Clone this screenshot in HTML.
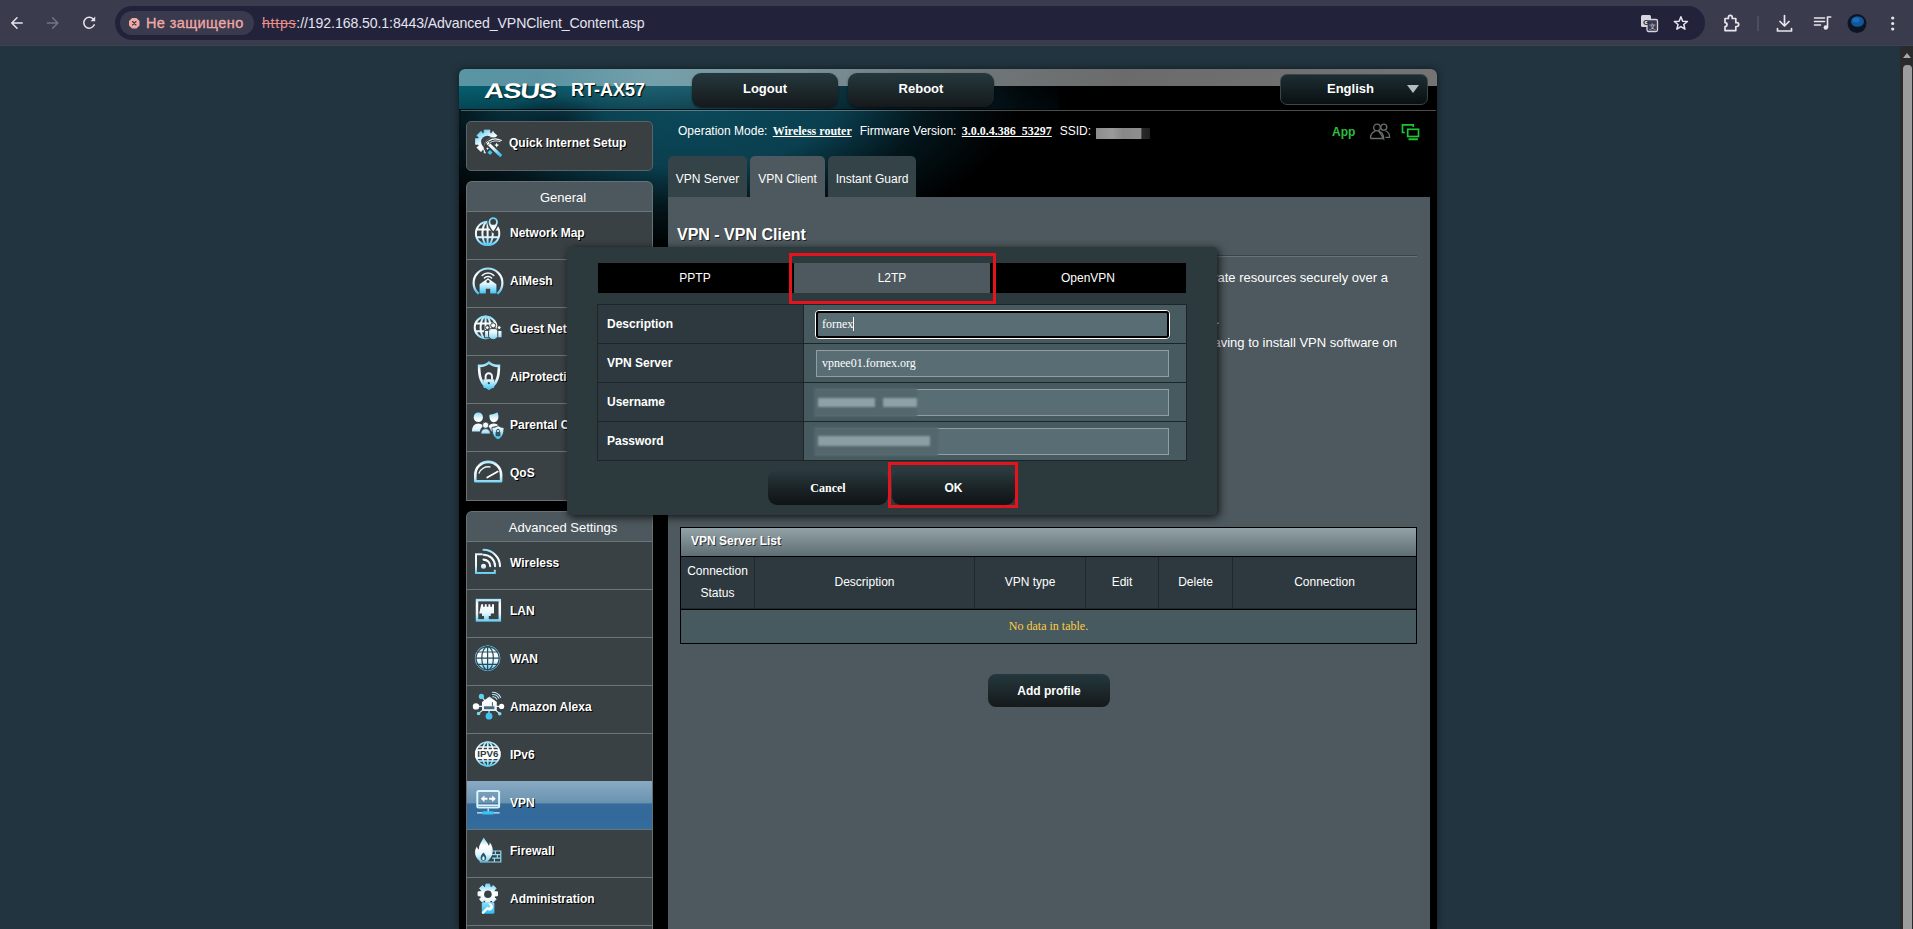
<!DOCTYPE html>
<html lang="en">
<head>
<meta charset="utf-8">
<title>ASUS Wireless Router RT-AX57 - VPN Client</title>
<style>
html,body{margin:0;padding:0;}
body{width:1913px;height:929px;overflow:hidden;position:relative;background:#21343f;font-family:"Liberation Sans",Arial,sans-serif;font-size:12px;color:#fff;}
.abs{position:absolute;}
/* ---------- browser chrome ---------- */
#chrome{left:0;top:0;width:1913px;height:46px;background:#3b3b4e;}
#chrome .strip{left:0;top:45px;width:1913px;height:1px;background:#3a4450;}
#urlbar{left:115px;top:6px;width:1590px;height:34px;border-radius:17px;background:#22223a;}
#chip{left:5px;top:5px;width:134px;height:24px;border-radius:12px;background:#3a3a4f;}
#chip span{left:26px;top:4px;font-size:14.5px;color:#f2a9a4;white-space:nowrap;letter-spacing:0.4px;-webkit-text-stroke:.3px #f2a9a4;}
#url{left:147px;top:9px;font-size:14.1px;letter-spacing:-.085px;color:#e4e4ee;white-space:nowrap;}
#url s{color:#e98f8a;letter-spacing:.75px;}
/* ---------- scrollbar ---------- */
#sb{left:1900px;top:46px;width:13px;height:883px;background:#2a2a2c;}
#sb .thumb{left:3px;top:19px;width:9px;height:880px;border-radius:4px;background:#9c9c9c;}
/* ---------- router ---------- */
#wrap{left:459px;top:69px;width:978px;height:860px;background:#000;border-radius:6px 6px 0 0;overflow:hidden;box-shadow:0 0 7px rgba(0,0,0,.5);}
.hbtn{height:34px;border-radius:9px;background:linear-gradient(#25383d,#15191b);font-weight:bold;font-size:13px;text-align:center;line-height:32px;box-shadow:0 1px 2px rgba(0,0,0,.6);}
.side{left:7px;width:187px;background:#3a4042;overflow:hidden;}
.side:after{content:"";position:absolute;left:0;top:0;right:0;bottom:0;border:1px solid #687174;border-radius:6px 6px 0 0;}
.mi{left:0;width:187px;height:47px;border-top:1px solid #6b7578;background:#3a4144;}
.mi span{left:44px;top:14px;font-weight:bold;font-size:12px;text-shadow:1px 1px 0 #000;white-space:nowrap;}
.mi svg.ic{position:absolute;left:0;top:-1px;}
.tab{top:87px;height:41px;border-radius:5px 5px 0 0;background:#344347;font-size:12px;text-align:center;line-height:46px;color:#fff;}
#content{left:209px;top:128px;width:762px;height:740px;background:#4d595e;}
.th{top:29px;height:51px;background:#2d393e;text-align:center;line-height:50px;font-size:12px;}
.dt{top:16px;height:30px;line-height:30px;text-align:center;font-size:12px;}
.dth{left:1px;width:205px;height:38px;background:#2d393e;font-weight:bold;font-size:12px;line-height:38px;text-indent:9px;}
.dtd{left:207px;width:382px;height:38px;background:#475a5f;}
.inp{left:12px;top:6px;width:351px;height:25px;border:1px solid #929ea1;background:#596e74;font-family:"Liberation Serif",serif;font-size:12px;color:#fff;}
.dbtn{top:223px;width:122px;height:35px;border-radius:9px;background:linear-gradient(#2a3a3e,#1a2225 55%,#0f1315);font-weight:bold;font-size:12px;text-align:center;line-height:37px;}
.lk{font-family:"Liberation Serif",serif;font-weight:bold;text-decoration:underline;}
th,td{padding:0;}
</style>
</head>
<body>
<svg width="0" height="0" style="position:absolute"><defs>
<linearGradient id="ig" gradientUnits="userSpaceOnUse" x1="0" y1="6" x2="0" y2="36"><stop offset="0" stop-color="#62d0f4"/><stop offset=".32" stop-color="#ffffff"/><stop offset=".62" stop-color="#e4f6fd"/><stop offset="1" stop-color="#25bbef"/></linearGradient>
<linearGradient id="ig2" gradientUnits="userSpaceOnUse" x1="0" y1="23" x2="0" y2="36"><stop offset="0" stop-color="#9fe2f8"/><stop offset="1" stop-color="#25bbef"/></linearGradient>
<linearGradient id="igq" gradientUnits="userSpaceOnUse" x1="4" y1="0" x2="22" y2="28"><stop offset="0" stop-color="#4ecbf3"/><stop offset=".45" stop-color="#ffffff"/><stop offset=".7" stop-color="#eaf8fe"/><stop offset="1" stop-color="#35c0ef"/></linearGradient>
</defs></svg>
<!-- browser toolbar -->
<div id="chrome" class="abs">
  <div class="strip abs"></div>
  <div id="urlbar" class="abs">
    <div id="chip" class="abs"><span class="abs">Не защищено</span></div>
    <svg class="abs" style="left:12.500px;top:11px;" width="12.500" height="12.500" viewBox="0 0 16 16"><path d="M5.200 1.300h5.600l3.900 3.900v5.600l-3.900 3.900h-5.600l-3.900-3.900v-5.600z" fill="#f2a9a4"/><path d="M5.800 5.800l4.400 4.400M10.200 5.800l-4.400 4.400" stroke="#3a3a4f" stroke-width="1.500" stroke-linecap="round"/></svg>
    <div id="url" class="abs"><s>https</s>://192.168.50.1:8443/Advanced_VPNClient_Content.asp</div>
  </div>
  <svg class="abs" style="left:0;top:0;" width="115" height="46" viewBox="0 0 115 46"><g fill="none" stroke-width="1.500" stroke-linecap="round" stroke-linejoin="round"><path d="M22.200 23h-10M17 17.800l-5.200 5.200 5.200 5.200" stroke="#e6e6ee"/><path d="M47.400 23h10M52.600 17.800l5.200 5.200-5.200 5.200" stroke="#74748a"/><path d="M93.600 19.600a5.400 5.400 0 1 0 .6 5.200" stroke="#e6e6ee"/></g><path d="M95.200 16.600v4.700h-4.700z" fill="#e6e6ee"/></svg>
  <svg class="abs" style="left:1630px;top:6px;" width="283" height="34" viewBox="0 0 283 34">
    <g fill="none" stroke="#e6e6ee" stroke-width="1.700" stroke-linejoin="round" stroke-linecap="round">
      <path d="M50.90 10.70L52.66 15.17L57.46 15.47L53.75 18.53L54.96 23.18L50.90 20.60L46.84 23.18L48.05 18.53L44.34 15.47L49.14 15.17z" stroke-width="1.500"/>
      <path d="M95 12.500h3.400v-1.200a1.900 1.900 0 0 1 3.800 0v1.200h3.600v4.200h1a1.900 1.900 0 0 1 0 3.800h-1v4.100h-10.800v-4a2 2 0 0 0 0-4z"/>
      <path d="M154.500 9.500v10M150 15.500l4.500 4.500 4.500-4.500M147.500 22.500v2.500h14v-2.500"/>
      <path d="M184.500 12h10M184.500 15.500h10M184.500 19h6" stroke-width="1.600"/><path d="M197.500 21.500v-10.500h3.200" stroke-width="1.600"/>
    </g>
    <circle cx="195.800" cy="21.500" r="2.200" fill="#e6e6ee"/>
    <path d="M128 10v15" stroke="#5a5a6e" stroke-width="1.300"/>
    <g fill="#e6e6ee"><circle cx="262.700" cy="12" r="1.600"/><circle cx="262.700" cy="17.500" r="1.600"/><circle cx="262.700" cy="23" r="1.600"/></g>
    <circle cx="227" cy="17.500" r="9.500" fill="#0c1524"/><ellipse cx="227.500" cy="15.500" rx="6.500" ry="5.300" fill="#12579a"/><ellipse cx="226" cy="14" rx="3.500" ry="2.500" fill="#1c6db8"/>
    <g><rect x="11" y="9" width="10" height="12" rx="1.500" fill="#d6d6e0"/><rect x="17" y="13.500" width="10.500" height="12" rx="1.500" fill="#3b3b4e" stroke="#d6d6e0" stroke-width="1.300"/><text x="16" y="18.500" text-anchor="middle" font-family="Liberation Sans,Arial,sans-serif" font-weight="bold" font-size="8" fill="#2b2b3c">G</text><text x="22.300" y="23.400" text-anchor="middle" font-family="Liberation Sans,Arial,sans-serif" font-size="7" fill="#d6d6e0">文</text></g>
  </svg>
</div>
<div id="sb" class="abs"><i class="abs" style="left:2.500px;top:6.500px;width:0;height:0;border-left:4.500px solid transparent;border-right:4.500px solid transparent;border-bottom:5px solid #a8a8a8;"></i><div class="thumb abs"></div></div>

<!-- router page -->
<div id="wrap" class="abs">
  <div class="abs" style="left:0;top:0;width:979px;height:240px;background:radial-gradient(ellipse 330px 150px at 230px 30px,#0b4a5b 0%,#0a3f4f 45%,rgba(6,36,46,.6) 72%,rgba(0,0,0,0) 100%);"></div>
  <div class="abs" style="left:0;top:17px;width:600px;height:24px;background:linear-gradient(90deg,#05606f 0,#0a586a 14%,#1b6273 30%,#1b5c6c 42%,#124453 55%,#06232b 72%,rgba(0,0,0,0) 100%);"></div>
  <div class="abs" style="left:0;top:17px;width:600px;height:24px;background:linear-gradient(rgba(0,0,0,0),rgba(0,20,30,.35));"></div>
  <div class="abs" style="left:40px;top:26px;width:110px;height:60px;background:radial-gradient(ellipse 50% 50% at 50% 50%,rgba(0,8,12,.6),rgba(0,0,0,0));"></div>
  <div id="hdr" class="abs" style="left:0;top:0;width:979px;height:17px;background:linear-gradient(90deg,#5995a3 0,#5a92a1 8%,#74a0ab 20%,#7a939a 34%,#70787b 50%,#6b6b6b 68%,#747474 100%);"></div>
  <div class="abs" style="left:0;top:40px;width:979px;height:1px;background:rgba(0,0,0,.75);"></div>
  <div class="abs" style="left:2px;top:41px;width:975px;height:1px;background:rgba(255,255,255,.3);"></div>
  <div class="abs" id="logo" style="left:27px;top:10px;font-size:21px;line-height:24px;font-weight:bold;letter-spacing:-1px;transform-origin:0 0;transform:scaleX(1.31) skewX(-5deg);text-shadow:1px 1px 1px rgba(0,0,0,.6);">ASUS</div>
  <div class="abs" style="left:112px;top:11px;font-size:18px;font-weight:bold;text-shadow:1px 1px 1px #000;">RT-AX57</div>
  <div class="hbtn abs" style="left:233px;top:4px;width:146px;">Logout</div>
  <div class="hbtn abs" style="left:389px;top:4px;width:146px;">Reboot</div>
  <div class="abs" id="lang" style="left:821px;top:5px;width:146px;height:29px;border:1px solid #37474d;border-radius:7px;background:linear-gradient(#1d2e33,#0a0f11);font-weight:bold;font-size:13px;line-height:27px;"><span class="abs" style="left:46px;top:0;">English</span><i class="abs" style="left:126px;top:10px;width:0;height:0;border-left:6px solid transparent;border-right:6px solid transparent;border-top:8px solid #b4bcc0;"></i></div>

  <!-- sidebar -->
  <div class="abs" id="qis" style="left:7px;top:52px;width:185px;height:48px;border:1px solid #596368;border-radius:5px;background:#3a4042;">
    <svg class="abs" style="left:8px;top:7px;" width="30" height="30" viewBox="0 0 30 30"><defs><clipPath id="qc"><path d="M0 0h19v3.500l5.500 4.500-9.500 .5-5 4.500-1.500 6 2.500 5.500-2.500 5.500h-8.500z"/></clipPath></defs>
<g clip-path="url(#qc)"><path d="M9.38 3.99 L9.18 1.15 L14.82 1.15 L14.62 3.99 L16.16 4.63 L18.03 2.48 L22.02 6.47 L19.87 8.34 L20.51 9.88 L23.35 9.68 L23.35 15.32 L20.51 15.12 L19.87 16.66 L22.02 18.53 L18.03 22.52 L16.16 20.37 L14.62 21.01 L14.82 23.85 L9.18 23.85 L9.38 21.01 L7.84 20.37 L5.97 22.52 L1.98 18.53 L4.13 16.66 L3.49 15.12 L0.65 15.32 L0.65 9.68 L3.49 9.88 L4.13 8.34 L1.98 6.47 L5.97 2.48 L7.84 4.63Z" fill="url(#igq)" stroke="url(#igq)" stroke-width="1" stroke-linejoin="round"/><circle cx="12.300" cy="13" r="6.200" fill="#3a4144"/></g>
<path d="M12 13.400l14.300 13.800" stroke="#3a4144" stroke-width="4.800"/><path d="M11.600 13l14.600 14.200" stroke="url(#igq)" stroke-width="3.100"/><path d="M13.300 12.600l-2.200 2.400M15 14.200l-2.200 2.400" stroke="#3a4144" stroke-width=".7"/>
<g fill="none" stroke="#e8f7fd" stroke-linecap="round"><path d="M13.800 12c3.600-2.600 7.600-3 12.600-.6" stroke-width="1.100"/><path d="M15.400 13.400c3.200-1.800 6.400-1.900 9.600-.8" stroke-width=".9"/></g>
<path d="M21.700 13.800l.9 1.600 1.700.7-1.700.7-.9 1.600-.9-1.600-1.700-.7 1.700-.7z" fill="#fff"/><path d="M12.500 18.200l.6 1 1 .4-1 .4-.6 1-.6-1-1-.4 1-.4z" fill="#fff"/><path d="M15 21l2.500 2.500-2.500 2.500-2.500-2.500z" fill="#3ec5f1"/></svg><span class="abs" style="left:42px;top:14px;font-weight:bold;font-size:12px;text-shadow:1px 1px 0 #000;white-space:nowrap;">Quick Internet Setup</span>
  </div>
  <div class="abs side" id="gen" style="top:112px;height:320px;border-radius:6px 6px 0 0;background:#4c585d;">
    <div class="abs" style="left:0;top:9px;width:194px;text-align:center;font-size:13px;">General</div>
    <div class="mi abs" style="top:30px;"><svg class="ic" width="50" height="48" viewBox="0 0 50 48"><g transform="translate(0,1)"><g fill="none" stroke="url(#ig)" stroke-width="2"><circle cx="21.6" cy="21.4" r="11.7"/><ellipse cx="21.6" cy="21.4" rx="5.2" ry="11.7"/><path d="M10.5 17.6h22.2M10.5 25.2h22.2M21.6 9.7v23.4"/></g>
<path d="M27.2 4.6a5.3 5.3 0 0 1 5.3 5.3c0 3.6-5.3 10.6-5.3 10.6s-5.3-7-5.3-10.6a5.3 5.3 0 0 1 5.3-5.3z" fill="url(#ig)" stroke="#3a4042" stroke-width="1.3"/><circle cx="27.2" cy="9.9" r="2.9" fill="#3a4042"/></g></svg><span class="abs">Network Map</span></div>
    <div class="mi abs" style="top:78px;"><svg class="ic" width="50" height="48" viewBox="0 0 50 48"><path d="M12.600 34.800A14.400 14.400 0 1 1 31.400 34.800" fill="none" stroke="url(#ig)" stroke-width="2.2"/>
<path d="M13.6 25.2l8.4-6 8.4 6v9.4h-6.2v-4.8h-4.4v4.8h-6.2z" fill="url(#ig)"/>
<path d="M16.2 16.4a8 8 0 0 1 11.6 0M18.4 19a5 5 0 0 1 7.2 0" fill="none" stroke="url(#ig)" stroke-width="1.5" stroke-linecap="round"/><circle cx="22" cy="22.4" r="1.5" fill="#3a4042"/></svg><span class="abs">AiMesh</span></div>
    <div class="mi abs" style="top:126px;"><svg class="ic" width="50" height="48" viewBox="0 0 50 48"><g transform="translate(0,1)"><g fill="none" stroke="url(#ig)" stroke-width="2"><circle cx="19.6" cy="19.4" r="10.9"/><ellipse cx="19.6" cy="19.4" rx="5" ry="10.9"/><path d="M9 15.6h21M9 23.2h21M19.6 8.5v21.8"/></g>
<g fill="url(#ig)" stroke="#3a4042" stroke-width="1"><circle cx="21.3" cy="19.6" r="1.9"/><path d="M18.6 22.4h5.2v7.4h-5.2z"/><circle cx="33.2" cy="19.6" r="1.9"/><path d="M30.8 22.4h5.2v7.4h-5.2z"/><circle cx="27.2" cy="17.4" r="2.5"/><path d="M22.6 23.2q0-2.6 2.6-2.6h4q2.6 0 2.6 2.6v5.600q-2 3-4.600 3t-4.600-3z"/></g></g></svg><span class="abs">Guest Network</span></div>
    <div class="mi abs" style="top:174px;"><svg class="ic" width="50" height="48" viewBox="0 0 50 48"><path d="M23 7.600c2.600 2.400 6 3.300 9.900 3.300 0 9-1 17.600-9.900 22.800-8.900-5.200-9.900-13.800-9.900-22.800 3.900 0 7.300-.9 9.900-3.300z" fill="none" stroke="url(#ig)" stroke-width="2.600"/>
<rect x="17.400" y="24.300" width="10.800" height="8.800" rx="1" fill="url(#ig)"/><path d="M19.600 24.300v-2.900a3.200 3.200 0 0 1 6.400 0v2.900" fill="none" stroke="url(#ig)" stroke-width="1.900"/><circle cx="22.800" cy="28.200" r="1.100" fill="#3a4042"/></svg><span class="abs">AiProtection</span></div>
    <div class="mi abs" style="top:222px;"><svg class="ic" width="50" height="48" viewBox="0 0 50 48"><g transform="translate(0,1)"><g fill="url(#ig)"><path d="M12.300 8.400c2.700 0 4.600 2 4.600 4.800s-1.900 4.800-4.600 4.800-4.600-2-4.600-4.800 1.900-4.800 4.600-4.800z"/><path d="M6 27.400c0-5 2.600-7.800 6.300-7.800 2.300 0 4 .9 5 2.600-2 1.100-3.100 3-3.300 5.200z"/>
<path d="M23.400 10.800c2.300-.2 5.800-1 8-2.600.9 1.600 1 3.200 1 4.800 0 2.800-1.900 5.200-4.600 5.200s-4.600-2.400-4.400-7.400z"/><path d="M22.400 22.400c1.200-1.800 3-2.800 5.400-2.800 2 0 3.600.7 4.700 2l-5.800 1.400-.5 4.200h-1.200c-.3-2-1.200-3.700-2.600-4.800z"/>
<circle cx="19.600" cy="21.200" r="3.100" stroke="#3a4042" stroke-width=".8"/><path d="M14.800 30c0-3.400 2-5.200 4.800-5.200s4.800 1.800 4.800 5.200z" stroke="#3a4042" stroke-width=".8"/>
<path d="M32 21.600c1.600 1.300 3.600 1.900 6 1.900 0 5.600-1 9.600-6 12.400-5-2.800-6-6.800-6-12.400 2.400 0 4.400-.6 6-1.900z" stroke="#3a4042" stroke-width=".9"/></g>
<rect x="29.600" y="28" width="4.800" height="4.200" rx=".6" fill="#33545f"/><path d="M30.600 28v-1.300a1.400 1.400 0 0 1 2.800 0v1.300" fill="none" stroke="#33545f" stroke-width="1"/></g></svg><span class="abs">Parental Controls</span></div>
    <div class="mi abs" style="top:270px;height:48px;"><svg class="ic" width="50" height="48" viewBox="0 0 50 48"><path d="M9.300 30.200v-6.400a12.900 12.900 0 0 1 25.800 0v6.400z" fill="none" stroke="url(#ig)" stroke-width="2.600" stroke-linejoin="round"/>
<path d="M12.800 22.600a9.800 9.800 0 0 1 11.600-6.600" fill="none" stroke="#dff4fc" stroke-width="1.400"/><path d="M21.200 26.600l10.600-6" stroke="#fff" stroke-width="1.700" stroke-linecap="round"/></svg><span class="abs">QoS</span></div>
  </div>
  <div class="abs side" id="adv" style="top:442px;height:420px;border-radius:6px 6px 0 0;background:#4c585d;">
    <div class="abs" style="left:0;top:9px;width:194px;text-align:center;font-size:13px;">Advanced Settings</div>
    <div class="mi abs" style="top:30px;"><svg class="ic" width="50" height="48" viewBox="0 0 50 48"><path d="M16.600 13.300h-6.600v18.800h18.800v-3.400" fill="none" stroke="url(#ig)" stroke-width="2"/><circle cx="17.500" cy="25.300" r="2.500" fill="url(#ig)"/>
<g fill="none" stroke="url(#ig)" stroke-width="2.100" stroke-linecap="round"><path d="M17.500 18.600a6.700 6.700 0 0 1 6.700 6.700"/><path d="M17.500 13.700a11.600 11.600 0 0 1 11.600 11.600"/><path d="M17.500 8.800a16.500 16.500 0 0 1 16.500 16.500"/></g></svg><span class="abs">Wireless</span></div>
    <div class="mi abs" style="top:78px;"><svg class="ic" width="50" height="48" viewBox="0 0 50 48"><rect x="11" y="11.100" width="22.800" height="20.300" fill="none" stroke="url(#ig)" stroke-width="2.500"/>
<path d="M15.200 15.200h1.900v2.600h1.700v-2.600h1.900v2.600h1.700v-2.600h1.900v2.600h1.700v-2.600h2v9.200h-3.200v2.600h-2v4h-4.800v-4h-2v-2.600h-2.800z" fill="url(#ig)"/></svg><span class="abs">LAN</span></div>
    <div class="mi abs" style="top:126px;"><svg class="ic" width="50" height="48" viewBox="0 0 50 48"><circle cx="21.600" cy="21.200" r="12.400" fill="url(#ig)" stroke="#5ac8ee" stroke-width=".8"/><g fill="none" stroke="#2c4a56" stroke-width="1.200"><ellipse cx="21.600" cy="21.200" rx="5.800" ry="11.600"/><path d="M21.600 9.400v23.600M9.600 21.200h24M11.400 15h20.400M11.400 27.400h20.400"/><circle cx="21.600" cy="21.200" r="11.500"/></g></svg><span class="abs">WAN</span></div>
    <div class="mi abs" style="top:174px;"><svg class="ic" width="50" height="48" viewBox="0 0 50 48"><g stroke="#dff2fa" stroke-width="1.100"><path d="M10 21.400h25.600M16.200 12.400l3 3.600M13 28.200l4-3.400M33.400 28.400l-4-3.400M23 25v4"/></g>
<path d="M16 17l7.400-5.400 7.400 5.400v9h-14.800z" fill="url(#ig)"/><rect x="18" y="21.300" width="10.400" height="2.900" fill="#4b6873"/><path d="M26.400 21.300v-4.200" stroke="#4b6873" stroke-width="1"/>
<circle cx="10" cy="21.400" r="3.200" fill="#fff"/><circle cx="35.600" cy="21.400" r="2.600" fill="#fff"/><circle cx="15.400" cy="11.400" r="2.600" fill="#5fd0f5"/><circle cx="23" cy="31.200" r="3.400" fill="#3ec5f1"/><circle cx="12.600" cy="28.500" r="1.800" fill="#7fd8f5"/><circle cx="33.700" cy="28.700" r="1.800" fill="#7fd8f5"/>
<g fill="none" stroke="#bfeaf9" stroke-width="1.100" stroke-linecap="round"><path d="M26.800 11.800a4 4 0 0 1 4 2.400"/><path d="M26.600 9.500a6.400 6.400 0 0 1 6.200 3.800"/><path d="M26.400 7.300a8.800 8.800 0 0 1 8.200 5.200"/></g></svg><span class="abs">Amazon Alexa</span></div>
    <div class="mi abs" style="top:222px;"><svg class="ic" width="50" height="48" viewBox="0 0 50 48"><g fill="none" stroke="url(#ig)" stroke-width="1.700"><circle cx="21.800" cy="21" r="12"/><ellipse cx="21.800" cy="21" rx="5.600" ry="12"/><path d="M21.800 9v24M12 14h19.600M12 28h19.600"/></g>
<rect x="9.200" y="16.300" width="25.200" height="9.600" rx="3" fill="#fff"/><text x="21.800" y="24.400" text-anchor="middle" font-family="Liberation Sans,Arial,sans-serif" font-weight="bold" font-size="8.600" fill="#2a3a40" textLength="21" lengthAdjust="spacingAndGlyphs">IPV6</text></svg><span class="abs">IPv6</span></div>
    <div class="mi abs" id="vpnmi" style="top:270px;border-top-color:#8aaac3;background:linear-gradient(#88a9c3 0%,#6993b0 44%,#356a9a 47%,#336a9b 80%,#316d9e 100%);"><svg class="ic" width="50" height="48" viewBox="0 0 50 48"><rect x="11.300" y="10" width="21.800" height="16.600" rx="1.500" fill="none" stroke="#d9f4fd" stroke-width="2"/><path d="M11.300 24.200h21.800" stroke="#d9f4fd" stroke-width="1.600"/><path d="M22.200 27.600v3.600M11 31.800h22.600" stroke="#c8eefb" stroke-width="1.300"/><rect x="16" y="30.200" width="12" height="3.300" rx="1.600" fill="#35c6f4"/>
<path d="M14.800 17.800l3.600-3.200v2.200h3v2h-3v2.200zM29.800 17.800l-3.600-3.200v2.200h-3v2h3v2.200z" fill="#fff"/></svg><span class="abs">VPN</span></div>
    <div class="mi abs" style="top:318px;"><svg class="ic" width="50" height="48" viewBox="0 0 50 48"><g transform="translate(0,.8)"><path d="M17.800 7.800c1 3 4 4.800 5 8.200.8-1 1-2.200.8-3.600 2.600 3 3.600 6.600 3 10.400-.4 3.400-2.200 6.400-5.200 8.800h-7.400c-3.400-2.400-5.200-5.800-5-9.600.1-2 .8-3.800 2-5.400.2 1.400.8 2.400 1.800 3 0-4.200 2.600-7.600 5-11.800z" fill="url(#ig)"/>
<path d="M17.400 22.600c1.600 1.800 2.800 3.400 2.800 5.400 0 1.800-1.200 3-2.800 3s-2.800-1.200-2.800-3c0-2 1.200-3.600 2.800-5.400z" fill="#2f5666"/><path d="M17.400 26.200c.8.900 1.300 1.700 1.300 2.600 0 .9-.6 1.500-1.300 1.500s-1.300-.6-1.300-1.500c0-.9.500-1.700 1.300-2.600z" fill="#e6f7fd"/>
<g fill="none" stroke="#8fdcf6" stroke-width="1.200"><path d="M25.400 21.200h9.400v11h-21"/><path d="M26.200 24.800h8.600M26.200 28.400h8.600M29.400 21.200v3.600M31.400 24.800v3.600M28.400 28.400v3.800"/></g></g></svg><span class="abs">Firewall</span></div>
    <div class="mi abs" style="top:366px;"><svg class="ic" width="50" height="48" viewBox="0 0 50 48"><path d="M23.95 23.78 L23.73 26.51 L19.87 26.51 L19.65 23.78 L18.38 23.25 L16.30 25.03 L13.57 22.30 L15.35 20.22 L14.82 18.95 L12.09 18.73 L12.09 14.87 L14.82 14.65 L15.35 13.38 L13.57 11.30 L16.30 8.57 L18.38 10.35 L19.65 9.82 L19.87 7.09 L23.73 7.09 L23.95 9.82 L25.22 10.35 L27.30 8.57 L30.03 11.30 L28.25 13.38 L28.78 14.65 L31.51 14.87 L31.51 18.73 L28.78 18.95 L28.25 20.22 L30.03 22.30 L27.30 25.03 L25.22 23.25Z" fill="url(#ig)" stroke="url(#ig)" stroke-width="1" stroke-linejoin="round"/><circle cx="21.900" cy="17.200" r="3.800" fill="#3a4144"/>
<g transform="translate(0,1)"><rect x="15.800" y="24.200" width="12.600" height="11.600" rx="1.500" fill="url(#ig2)"/><path d="M17 34.600l4.600-4.600" stroke="#fff" stroke-width="2.400" stroke-linecap="round"/><path d="M20.600 31a3.500 3.500 0 1 0 1.600-5.400l2.500 2.500-2.200 2.200z" fill="#fff"/></g></svg><span class="abs">Administration</span></div>
    <div class="mi abs" style="top:414px;"></div>
  </div>

  <!-- status line -->
  <div class="abs" id="status" style="left:219px;top:55px;white-space:nowrap;font-size:12px;">Operation Mode: <span class="lk" style="margin-left:2px;">Wireless router</span><span style="margin-left:8px;">Firmware Version:</span> <span class="lk" style="margin-left:2px;">3.0.0.4.386_53297</span><span style="margin-left:8px;">SSID:</span></div>
  <div class="abs" style="left:637px;top:59px;width:54px;height:11px;background:linear-gradient(90deg,#8c8c8c,#9a9a9a 30%,#888 50%,#8e8e8e 83%,#2a2a2a 85%,#202020 100%);filter:blur(.6px);"></div>
  <div class="abs" style="left:873px;top:56px;font-weight:bold;color:#2ebd3e;">App</div>
  <svg class="abs" style="left:910px;top:53px;" width="22" height="19" viewBox="0 0 22 19"><g fill="none" stroke="#6a6d6e" stroke-width="1.300"><circle cx="8" cy="5.500" r="3.300"/><circle cx="14.800" cy="5.200" r="3"/><path d="M1.500 16.500c0-4.500 2.500-6.800 4.800-7.200M9.800 9.300c2.300.5 4.800 2.700 4.800 7.200zM1.500 16.500h13.100M16.600 9c2 .6 4 2.300 4 6.300h-4.200"/></g></svg>
  <svg class="abs" style="left:942px;top:54px;" width="20" height="18" viewBox="0 0 20 18"><g fill="none" stroke="#22c233" stroke-width="1.700"><path d="M3.800 9.500h-2.300v-7.600h10.700v2.200"/><rect x="6.700" y="6.300" width="10.800" height="7.200"/><path d="M7.500 16.300h9.400" stroke-width="1.900"/></g></svg>
  <!-- tabs -->
  <div class="tab abs" style="left:209px;width:79px;">VPN Server</div>
  <div class="tab abs" style="left:291px;width:75px;background:#4d595e;">VPN Client</div>
  <div class="tab abs" style="left:369px;width:88px;">Instant Guard</div>

  <!-- content -->
  <div id="content" class="abs">
    <div class="abs" style="left:9px;top:29px;font-size:16px;font-weight:bold;text-shadow:1px 1px 0 #222;">VPN - VPN Client</div>
    <div class="abs" style="left:10px;top:58px;width:739px;height:1px;background:#3a4549;border-bottom:1px solid #65737a;"></div>
    <div class="abs" id="desc" style="left:10px;top:69px;width:740px;font-size:13px;line-height:22px;color:#fff;">
      <div class="abs" style="right:30px;top:1px;white-space:nowrap;">VPN (Virtual Private Network) clients are often used to connect to a VPN server to access private resources securely over a</div>
      <div class="abs" style="left:0;top:22px;white-space:nowrap;">public network.</div>
      <div class="abs" style="left:0;top:43px;white-space:nowrap;">Some devices like set-top boxes, smart TVs and Blu-ray players do not support VPN software.</div>
      <div class="abs" style="right:21px;top:66px;white-space:nowrap;">The ASUSWRT VPN feature provides VPN access to all devices in a home network without having to install VPN software on</div>
      <div class="abs" style="left:0;top:87px;white-space:nowrap;">each device.</div>
    </div>
    <!-- VPN server list -->
    <div class="abs" id="vlist" style="left:12px;top:330px;width:735px;height:115px;border:1px solid #000;background:#000;">
      <div class="abs" style="left:0;top:0;width:735px;height:28px;background:linear-gradient(#93a2a7,#5f6e73);"><span class="abs" style="left:10px;top:6px;font-weight:bold;font-size:12px;text-shadow:1px 1px 0 #333;">VPN Server List</span></div>
      <div class="abs" style="left:0;top:29px;width:735px;height:52px;background:#1f292d;"></div>
      <div class="abs th" style="left:0;width:73px;line-height:22px;padding-top:3px;height:48px;">Connection<br>Status</div>
      <div class="abs th" style="left:74px;width:219px;">Description</div>
      <div class="abs th" style="left:294px;width:110px;">VPN type</div>
      <div class="abs th" style="left:405px;width:72px;">Edit</div>
      <div class="abs th" style="left:478px;width:73px;">Delete</div>
      <div class="abs th" style="left:552px;width:183px;">Connection</div>
      <div class="abs" style="left:0;top:82px;width:735px;height:33px;background:#465a5f;text-align:center;line-height:32px;color:#ffcc44;font-family:'Liberation Serif',serif;font-size:12px;">No data in table.</div>
    </div>
    <div class="abs" id="addp" style="left:320px;top:477px;width:122px;height:33px;border-radius:8px;background:linear-gradient(#25383d,#15191b);font-weight:bold;font-size:12px;text-align:center;line-height:35px;">Add profile</div>
  </div>

  <!-- dialog -->
  <div id="dlg" class="abs" style="left:108px;top:178px;width:650px;height:268px;background:#2c393d;border-radius:4px;box-shadow:2px 2px 8px rgba(0,0,0,.8);">
    <div class="abs" style="left:31px;top:16px;width:588px;height:30px;background:#000;"></div>
    <div class="abs dt" style="left:31px;width:194px;">PPTP</div>
    <div class="abs dt" style="left:227px;width:196px;background:#4d595e;">L2TP</div>
    <div class="abs dt" style="left:423px;width:196px;">OpenVPN</div>
    <div class="abs" style="left:222px;top:6px;width:201px;height:45px;border:3px solid #e5131b;"></div>
    <div class="abs" id="dtbl" style="left:30px;top:57px;width:590px;height:157px;background:#1c2528;">
      <div class="abs dth" style="top:1px;">Description</div>
      <div class="abs dth" style="top:40px;">VPN Server</div>
      <div class="abs dth" style="top:79px;">Username</div>
      <div class="abs dth" style="top:118px;">Password</div>
      <div class="abs dtd" style="top:1px;"><div class="abs" style="left:11px;top:5px;width:353px;height:27px;border:1px solid #fff;border-radius:4px;"><div class="abs" style="left:0;top:0;width:349px;height:23px;border:2px solid #000;border-radius:3px;background:#596e74;font-family:'Liberation Serif',serif;font-size:12px;"><span class="abs" style="left:4px;top:4px;">fornex</span><i class="abs" style="left:35px;top:4px;width:1px;height:14px;background:#fff;"></i></div></div></div>
      <div class="abs dtd" style="top:40px;"><div class="abs inp"><span class="abs" style="left:5px;top:5px;">vpnee01.fornex.org</span></div></div>
      <div class="abs dtd" style="top:79px;"><div class="abs inp"></div>
        <div class="abs" style="left:10px;top:5px;width:103px;height:29px;background:#53676d;filter:blur(1px);"></div>
        <div class="abs" style="left:14px;top:15px;width:57px;height:9px;background:#8da1a6;filter:blur(1.2px);"></div>
        <div class="abs" style="left:79px;top:15px;width:34px;height:9px;background:#8da1a6;filter:blur(1.2px);"></div></div>
      <div class="abs dtd" style="top:118px;"><div class="abs inp"></div>
        <div class="abs" style="left:10px;top:5px;width:124px;height:29px;background:#53676d;filter:blur(1px);"></div>
        <div class="abs" style="left:14px;top:14px;width:112px;height:10px;background:#8a9ea3;filter:blur(1.2px);"></div></div>
    </div>
    <div class="abs dbtn" style="left:201px;width:120px;font-family:'Liberation Serif',serif;">Cancel</div>
    <div class="abs dbtn" style="left:325px;width:123px;">OK</div>
    <div class="abs" style="left:321px;top:215px;width:124px;height:40px;border:3px solid #e5131b;"></div>
  </div>
</div>
</body>
</html>
